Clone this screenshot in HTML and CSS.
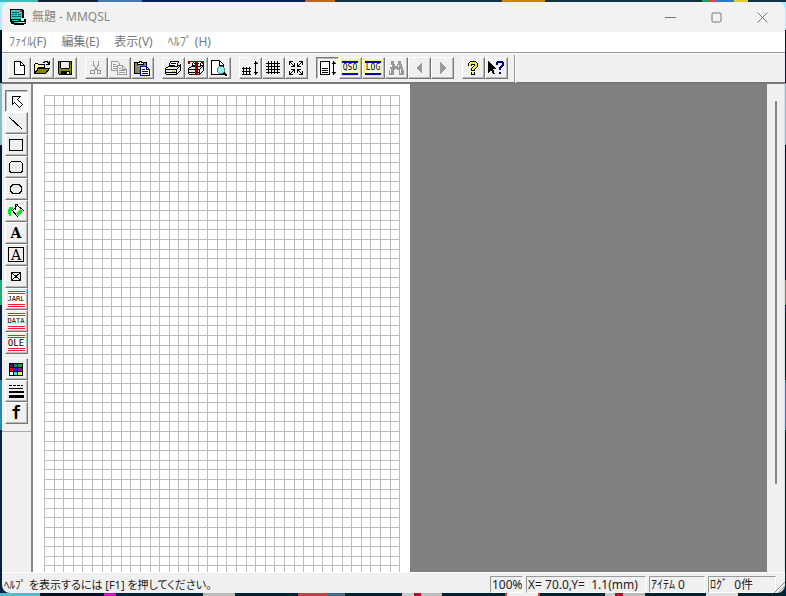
FILE: index.html
```html
<!DOCTYPE html>
<html lang="ja">
<head>
<meta charset="utf-8">
<title>無題 - MMQSL</title>
<link rel="stylesheet" href="styles.css">
</head>
<body>
<div class="window">
  <header class="titlebar">
    <svg class="app-icon" viewBox="0 0 18 18"><path fill="#000" d="M1 1h13v1h1v9h2v5h-2v1H5v-1H2v-2H1z"/><path fill="#3cc" d="M2 2h11v9H2zM3 12h7v1H3zm2 2h5v1H5z"/><path fill="#a33" d="M11 2h2v2h-2z"/><path fill="#055" d="M3 4h7v1H3zm0 2h2v1H3zm3 0h2v1H6zm3 0h3v1H9zM3 8h9v1H3z"/><path fill="#eed" d="M12 10h3v3h-3zM9 14h7v1H9z"/></svg>
    <h1 class="title">無題 - MMQSL</h1>
    <button class="caption" aria-label="最小化"><svg viewBox="0 0 11 11"><path d="M0 5.5h11"/></svg></button>
    <button class="caption" aria-label="最大化"><svg viewBox="0 0 11 11"><rect x="1" y="1" width="9" height="9" rx="1"/></svg></button>
    <button class="caption" aria-label="閉じる"><svg viewBox="0 0 11 11"><path d="M.5.5l10 10m0-10l-10 10"/></svg></button>
  </header>
  <nav class="menubar">
    <button>ﾌｧｲﾙ(F)</button><button>編集(E)</button><button>表示(V)</button><button>ﾍﾙﾌﾟ (H)</button>
  </nav>
  <div class="toolbar" role="toolbar">
    <div class="group">
      <button class="tool" aria-label="新規"><svg viewBox="0 0 16 16"><path fill="#fff" stroke="#000" d="M3.500 1.500h6l4 4v9h-10z"/><path d="M9.500 1.500v4h4"/></svg></button>
      <button class="tool" aria-label="開く"><svg viewBox="0 0 16 16"><path fill="#ff8" stroke="#000" d="M.5 13.500v-9l1-1h2l1 1h6v3h-6z"/><path fill="#880" stroke="#000" d="M.5 13.500l4-5h11l-4 5z"/><path d="M9 2.500h1l1-1h2l2 2M15.500 1v3.500H12"/></svg></button>
      <button class="tool" aria-label="保存"><svg viewBox="0 0 16 16"><path fill="#880" stroke="#000" d="M1.500 1.500h13v13h-12l-1-1z"/><path fill="#eee" d="M4 2h8v6H4z"/><path fill="#000" d="M3 1h1v7H3zm9 0h1v7h-1zM4 8h8v1H4zm0 3h9v4H4z"/><path fill="#eee" d="M10 12h2v2h-2z"/></svg></button>
    </div>
    <div class="group">
      <button class="tool off" aria-label="切り取り"><svg viewBox="0 0 16 16"><path d="M5.500 1v4l4 5M10.500 1v4l-4 5"/><circle cx="4.500" cy="12" r="2"/><circle cx="11" cy="12" r="2"/></svg></button>
      <button class="tool off" aria-label="コピー"><svg viewBox="0 0 16 16"><path d="M.5 1.500h6l2 2v7h-8zM2 4.500h3M2 6.500h4M2 8.500h4"/><path fill="#f0f0f0" stroke="#999" d="M6.500 5.500h5l4 4v5h-9z"/><path d="M11.500 5.500v4h4M8 8.500h2M8 10.500h6M8 12.500h6"/></svg></button>
      <button class="tool" aria-label="貼り付け"><svg viewBox="0 0 16 16"><path fill="#885" stroke="#000" d="M.5 2.500h12v11h-12z"/><path fill="#ff8" stroke="#000" d="M3.500 4.500v-2h2v-1h2v1h2v2z"/><path fill="#fff" stroke="#008" d="M6.500 6.500h6l3 3v6h-9z"/><path stroke="#008" d="M8 9.500h3M8 11.500h6M8 13.500h6M12.500 7v2.500H15"/></svg></button>
    </div>
    <div class="group">
      <button class="tool" aria-label="印刷"><svg viewBox="0 0 16 16"><g id="printer"><path fill="#fff" stroke="#000" d="M3.500 7.500l2-6h8l-2 6"/><path fill="#eee" stroke="#000" d="M.5 8.500l3-2h9l3-2v6l-4 4h-10l-1-1z"/><path d="M.5 9.500h11l4-4M1 12.500h10M11.500 9v5M6 3.500h5M5 5.500h5"/><path stroke="#cc0" d="M7 11h3"/></g></svg></button>
      <button class="tool" aria-label="文字印刷"><svg viewBox="0 0 16 16"><use href="#printer"/><path stroke="#800" d="M0 1.500h16"/><path fill="#800" d="M0 1h2v3H0zm14 0h2v3h-2zM7 1h3v13H7zM5 14h7v1H5z"/></svg></button>
      <button class="tool" aria-label="印刷プレビュー"><svg viewBox="0 0 16 16"><path fill="#fff" stroke="#000" d="M.5.5h8l4 4v10h-12z"/><path d="M8.500 1v4h4"/><circle cx="10" cy="10" r="3.500" fill="#9ee" stroke="#488"/><path stroke-width="2" d="M13 13l3 3"/></svg></button>
    </div>
    <div class="group">
      <button class="tool" aria-label="グリッド間隔"><svg viewBox="0 0 16 16"><path d="M0 8.500h9M0 11.500h9M0 14.500h9M1.500 7v8M4.500 7v8M7.500 7v8M13.500 1v14M11.500 3.500h4M12.500 2.500h2M11.500 12.500h4M12.500 13.500h2"/></svg></button>
      <button class="tool" aria-label="グリッド"><svg viewBox="0 0 16 16"><path d="M1 3.500h14M1 6.500h14M1 9.500h14M1 12.500h14M3.500 1v13M6.500 1v13M9.500 1v13M12.500 1v13"/></svg></button>
      <button class="tool" aria-label="グリッドに合わせる"><svg viewBox="0 0 16 16"><path d="M1.500 5v-3.500H5M2 2l4 4M6.500 3v3.500H3M11 1.500h3.500V5M14 2l-4 4M9.500 3v3.500H13M1.500 11v3.500H5M2 14l4-4M3 9.500h3.500V13M11 14.500h3.500V11M14 14l-4-4M13 9.500H9.500V13"/></svg></button>
    </div>
    <div class="group">
      <button class="tool pressed" aria-label="ページ表示"><svg viewBox="0 0 16 16"><path fill="#fff" stroke="#000" d="M.5 1.500h9v13h-9z"/><path d="M2 8.500h6M2 10.500h6M2 12.500h6M13.500 1v14M11.500 3.500h4M12.500 2.500h2M11.500 12.500h4M12.500 13.500h2"/></svg></button>
      <button class="tool"><span class="badge">QSO</span></button>
      <button class="tool"><span class="badge">LOG</span></button>
      <button class="tool off" aria-label="検索"><svg viewBox="0 0 16 16"><path fill="#999" d="M3 1h3v3h1v2h2V4h1V1h3v3h1v3h1v3h1v5h-5v-5H9V9H7v1H6v5H1v-5h1V7h1z"/><path stroke="#fff" d="M3.500 5v2M2.500 9v4M10.500 5v2M12.500 9v4"/></svg></button>
      <button class="tool off" aria-label="前へ"><svg viewBox="0 0 16 16"><path fill="#999" d="M11 2v12L5 8z"/></svg></button>
      <button class="tool off" aria-label="次へ"><svg viewBox="0 0 16 16"><path fill="#999" d="M6 2v12l6-6z"/></svg></button>
    </div>
    <div class="group">
      <button class="tool" aria-label="バージョン情報"><svg viewBox="0 0 16 16"><path stroke-width="4" d="M5 6V4l1-1h4l1 1v2L8 9v2M8 12v3"/><path stroke="#ee3" stroke-width="2" d="M5 6V4l1-1h4l1 1v2L8 9v1M8 12v2"/></svg></button>
      <button class="tool" aria-label="ヘルプ"><svg viewBox="0 0 16 16"><path fill="#000" d="M0 1l8 8H5l2 5H5l-2-4-3 3z"/><path stroke="#008" stroke-width="2" d="M9 5V3l1-1h4l1 1v2l-3 3v2M12 12v2"/></svg></button>
    </div>
    <span class="bar-end"></span>
  </div>
  <main class="workspace">
    <aside class="palette">
      <div class="stack">
        <button class="tool pressed" aria-label="選択"><svg viewBox="0 0 16 16"><path fill="#fff" stroke="#000" d="M3.500 3.500h8l-3 3 5 5-3 3-5-5-2 2z"/></svg></button>
        <button class="tool" aria-label="直線"><svg viewBox="0 0 16 16"><path d="M1 2l13 12"/></svg></button>
        <button class="tool" aria-label="四角"><svg viewBox="0 0 16 16"><path d="M1.500 2.500h13v11h-13z"/></svg></button>
        <button class="tool" aria-label="角丸四角"><svg viewBox="0 0 16 16"><rect x="1.500" y="2.500" width="13" height="11" rx="3"/></svg></button>
        <button class="tool" aria-label="円"><svg viewBox="0 0 16 16"><ellipse cx="8" cy="8" rx="6" ry="5"/></svg></button>
        <button class="tool" aria-label="塗りつぶし"><svg viewBox="0 0 16 16"><path fill="#fff" stroke="#000" d="M4.500 7.500l5-5 6 5-6 6z"/><path fill="#0e2" d="M1 4h4v2H4v2H3v5H1v-2H0V6h1zM8 10l4-4 3 2-5 5z"/><path d="M7.500 7V2l2-1"/></svg></button>
        <button class="tool"><span class="glyph">A</span></button>
        <button class="tool"><span class="glyph boxed">A</span></button>
        <button class="tool" aria-label="画像枠"><svg viewBox="0 0 16 16"><path d="M3.500 3.500h9v8h-9zM4 4l8 7M12 4l-8 7"/></svg></button>
        <button class="tool"><span class="field">JARL</span></button>
        <button class="tool"><span class="field">DATA</span></button>
        <button class="tool"><span class="field large">OLE</span></button>
      </div>
      <div class="stack">
        <button class="tool" aria-label="色"><svg viewBox="0 0 16 16"><path fill="#000" d="M1 2h14v13H1z"/><path fill="#606" d="M2 3h3v3H2z"/><path fill="#088" d="M6 3h3v3H6z"/><path fill="#0a2" d="M10 3h4v3h-4z"/><path fill="#e00" d="M2 7h3v3H2z"/><path fill="#22e" d="M6 7h3v3H6z"/><path fill="#a0a" d="M10 7h4v3h-4z"/><path fill="#fff" d="M2 11h3v3H2z"/><path fill="#3ee" d="M6 11h3v3H6z"/><path fill="#ee3" d="M10 11h4v3h-4z"/></svg></button>
        <button class="tool" aria-label="線種"><svg viewBox="0 0 16 16"><path stroke-dasharray="3 1" d="M1 2.500h14"/><path d="M1 5.500h14"/><path fill="#000" d="M1 8h15v2H1zm0 4h15v3H1z"/></svg></button>
        <button class="tool"><span class="glyph font">f</span></button>
      </div>
    </aside>
    <section class="sheet" aria-label="用紙">
      <svg class="grid">
        <defs><pattern id="cells" width="48" height="48" patternUnits="userSpaceOnUse"><path d="M.5 0v48M10.500 0v48M19.500 0v48M29.500 0v48M38.500 0v48M0 .5h48M0 10.500h48M0 19.500h48M0 29.500h48M0 38.500h48"/></pattern></defs>
        <rect width="100%" height="100%" fill="url(#cells)"/>
      </svg>
    </section>
    <div class="backdrop"></div>
    <div class="scrollbar"><span class="thumb"></span></div>
  </main>
  <footer class="status">
    <span class="message">ﾍﾙﾌﾟ を表示するには [F1] を押してください。</span>
    <span class="pane zoom">100%</span>
    <span class="pane position">X= 70.0,Y=&nbsp; 1.1(mm)</span>
    <span class="pane items">ｱｲﾃﾑ 0</span>
    <span class="pane log">ﾛｸﾞ&nbsp; 0件</span>
    <svg class="grip" viewBox="0 0 11 14"><path d="M0 14L11 3M4 14l7-7M8 14l3-3"/></svg>
  </footer>
</div>
</body>
</html>
```
FILE: styles.css
```css
* { box-sizing: border-box; }

body {
  margin: 0;
  height: 100vh;
  padding: 2px 1px 3px 2px;
  overflow: hidden;
  font: 12px/18px "Noto Sans", "Noto Sans CJK JP", sans-serif;
  color: #222;
  background:
    linear-gradient(90deg, #5bc 0 40px, #012 40px 104px, #c1c 104px 116px, #023 116px 203px, #bbb 203px 235px, #023 235px 298px, #b44 298px 328px, #468 328px 345px, #023 345px 402px, #ccc 402px 414px, #a13 414px 421px, #bbb 421px 442px, #023 442px 505px, #c43 505px 507px, #eee 507px 538px, #c43 538px 540px, #023 540px 605px, #ccc 605px 615px, #a13 615px 623px, #bbb 623px 645px, #023 645px 706px, #ddd 706px 738px, #023 738px) bottom / 100% 3px no-repeat,
    linear-gradient(90deg, #4bb 0 38px, #123 38px 98px, #47a 98px 142px, #025 142px 305px, #b62 305px 335px, #134 335px 502px, #c80 502px 545px, #134 545px 702px, #295 702px 710px, #d44 710px 716px, #37c 716px 734px, #dc3 734px 748px, #134 748px) top / 100% 2px no-repeat,
    linear-gradient(#aef 0 30px, #013 30px 83px, #8bc 83px 145px, #013 145px 280px, #2a7 280px 305px, #024 305px 380px, #28b 380px 430px, #024 430px);
}

button { font: inherit; color: inherit; border: 0; padding: 0; background: none; }

.window {
  height: 100%;
  display: flex;
  flex-direction: column;
  background: #f0f0f0;
  border-radius: 8px;
  overflow: hidden;
}

.titlebar { display: flex; align-items: center; height: 30px; padding-left: 7px; color: #888; background: #f2f2f2; }
.app-icon { width: 18px; height: 18px; margin-right: 5px; shape-rendering: crispEdges; }
.title { flex: 1; margin: 0; font-size: 12px; font-weight: 400; }
.caption { display: flex; justify-content: center; align-items: center; width: 46px; height: 28px; }
.caption svg { width: 11px; height: 11px; fill: none; stroke: #777; }

.menubar { display: flex; gap: 15px; height: 20px; padding-left: 7px; background: #fff; color: #777; }

.toolbar {
  display: flex;
  gap: 8px;
  height: 32px;
  padding: 4px 6px 0;
  border-top: 1px solid #999;
  border-bottom: 2px solid #777;
  box-shadow: inset 0 1px #fff;
}
.group { display: flex; }
.tool {
  display: flex;
  justify-content: center;
  align-items: center;
  width: 23px;
  height: 22px;
  padding: 0 1px 1px 0;
  border: 1px solid;
  border-color: #fff #777 #777 #fff;
  box-shadow: inset -1px -1px #bbb;
  background: #f0f0f0;
  color: #000;
}
.tool.pressed { padding: 0; border-color: #777 #fff #fff #777; background: #f8f8f8; box-shadow: inset 1px 1px #bbb; }
.tool svg { width: 16px; height: 16px; fill: none; stroke: #000; shape-rendering: crispEdges; }
.tool svg [fill]:not([stroke]) { stroke: none; }
.tool.off svg { stroke: #999; }
.bar-end { width: 2px; height: 28px; margin: -2px 0 0 -2px; border-left: 1px solid #999; border-right: 1px solid #fff; }

.badge {
  width: 18px;
  height: 16px;
  border: 1px solid #ee8;
  background: linear-gradient(#00b 0 2px, #ffd 2px 12px, #00b 12px 14px);
  font: 8px/14px "DejaVu Sans Mono", monospace;
  text-align: center;
}
.glyph { width: 16px; font: bold 14px/16px "DejaVu Serif", serif; text-align: center; }
.glyph.boxed { height: 15px; font-weight: 400; line-height: 14px; border: 1px solid #000; }
.glyph.font { font: bold 17px/16px "DejaVu Sans Mono", monospace; }
.field {
  width: 17px;
  height: 16px;
  background: linear-gradient(#e22 0 1px, #fff 1px 2px, #e22 2px 3px, #fff 3px 13px, #e22 13px 14px, #fff 14px 15px, #e22 15px 16px);
  font: 7px/16px "DejaVu Sans Mono", monospace;
}
.field.large { font-size: 9px; }

.workspace { flex: 1; min-height: 0; display: flex; }
.palette { flex: none; width: 31px; padding: 6px 0 0 3px; border-right: 2px solid #888; }
.stack { margin-bottom: 4px; }
.stack:last-child { height: 74px; margin: 0 0 0 -3px; padding-left: 3px; border-bottom: 1px solid #aaa; }
.sheet { flex: 0 0 377px; padding: 11px 10px 0 11px; background: #fff; overflow: hidden; }
.grid { display: block; width: 100%; height: 100%; stroke: #bbb; shape-rendering: crispEdges; }
.grid rect { stroke: none; }
.backdrop { flex: 1; background: #808080; }
.scrollbar { width: 18px; display: flex; justify-content: center; padding: 17px 0 88px; border-right: 1px solid #ddd; }
.thumb { width: 2px; border-radius: 1px; background: #858585; }

.status { position: relative; display: flex; gap: 3px; height: 21px; padding: 3px 9px 0 2px; border-top: 1px solid #fff; }
.message { flex: 1; white-space: nowrap; font-size: 11px; font-feature-settings: "palt"; }
.pane { height: 17px; padding-left: 1px; border: 1px solid; border-color: #999 #fff #fff #999; line-height: 15px; white-space: nowrap; }
.zoom { width: 33px; }
.position { width: 120px; }
.items { width: 56px; }
.log { width: 68px; }
.grip { position: absolute; right: 0; bottom: 0; width: 11px; height: 14px; fill: none; stroke: #888; }
```
